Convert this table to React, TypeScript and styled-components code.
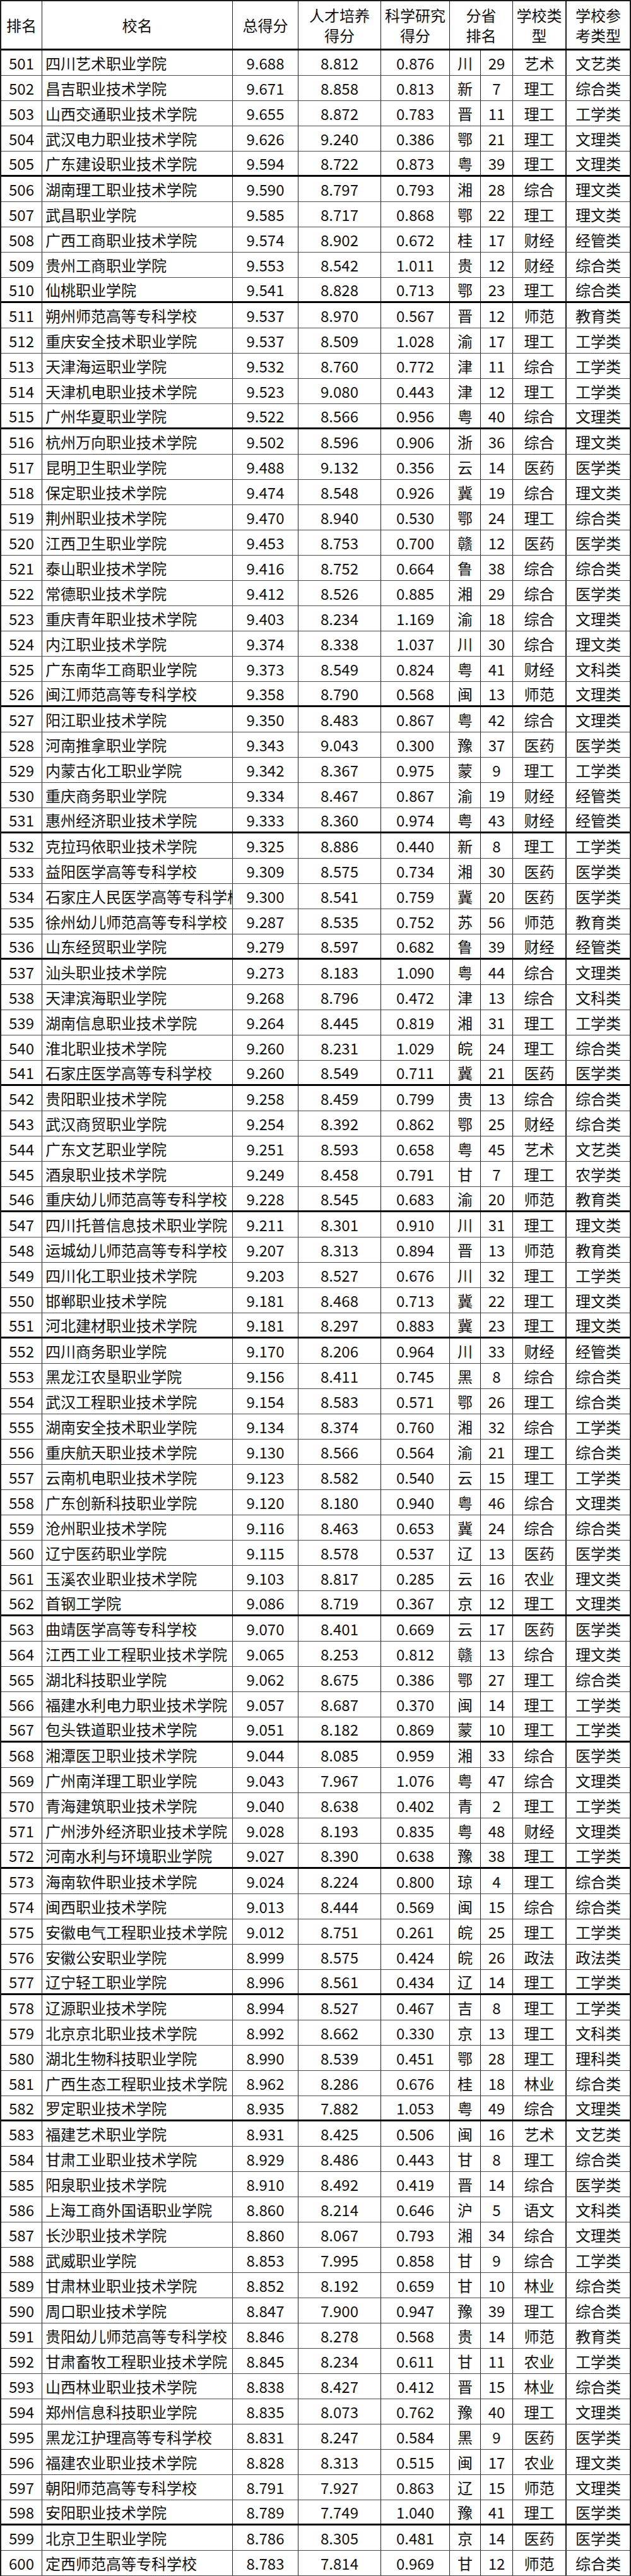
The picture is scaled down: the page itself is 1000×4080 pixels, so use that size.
import styled, { createGlobalStyle } from 'styled-components'

const GlobalStyle = createGlobalStyle`
  html, body {
    margin: 0;
    padding: 0;
    background: #fff;
  }
  body {
    font-family: 'Noto Sans CJK SC', 'Noto Sans', sans-serif;
    color: #111;
  }
`

const COLUMNS = '65px 302px 104px 131px 109px 49px 51px 85px 100px'

// rank name total talent research province provRank type refType
const RAW = `501 四川艺术职业学院 9.688 8.812 0.876 川 29 艺术 文艺类
502 昌吉职业技术学院 9.671 8.858 0.813 新 7 理工 综合类
503 山西交通职业技术学院 9.655 8.872 0.783 晋 11 理工 工学类
504 武汉电力职业技术学院 9.626 9.240 0.386 鄂 21 理工 文理类
505 广东建设职业技术学院 9.594 8.722 0.873 粤 39 理工 文理类
506 湖南理工职业技术学院 9.590 8.797 0.793 湘 28 综合 理文类
507 武昌职业学院 9.585 8.717 0.868 鄂 22 理工 理文类
508 广西工商职业技术学院 9.574 8.902 0.672 桂 17 财经 经管类
509 贵州工商职业学院 9.553 8.542 1.011 贵 12 财经 综合类
510 仙桃职业学院 9.541 8.828 0.713 鄂 23 理工 综合类
511 朔州师范高等专科学校 9.537 8.970 0.567 晋 12 师范 教育类
512 重庆安全技术职业学院 9.537 8.509 1.028 渝 17 理工 工学类
513 天津海运职业学院 9.532 8.760 0.772 津 11 综合 工学类
514 天津机电职业技术学院 9.523 9.080 0.443 津 12 理工 工学类
515 广州华夏职业学院 9.522 8.566 0.956 粤 40 综合 文理类
516 杭州万向职业技术学院 9.502 8.596 0.906 浙 36 综合 理文类
517 昆明卫生职业学院 9.488 9.132 0.356 云 14 医药 医学类
518 保定职业技术学院 9.474 8.548 0.926 冀 19 综合 理文类
519 荆州职业技术学院 9.470 8.940 0.530 鄂 24 理工 综合类
520 江西卫生职业学院 9.453 8.753 0.700 赣 12 医药 医学类
521 泰山职业技术学院 9.416 8.752 0.664 鲁 38 综合 综合类
522 常德职业技术学院 9.412 8.526 0.885 湘 29 综合 医学类
523 重庆青年职业技术学院 9.403 8.234 1.169 渝 18 综合 文理类
524 内江职业技术学院 9.374 8.338 1.037 川 30 综合 理文类
525 广东南华工商职业学院 9.373 8.549 0.824 粤 41 财经 文科类
526 闽江师范高等专科学校 9.358 8.790 0.568 闽 13 师范 文理类
527 阳江职业技术学院 9.350 8.483 0.867 粤 42 综合 文理类
528 河南推拿职业学院 9.343 9.043 0.300 豫 37 医药 医学类
529 内蒙古化工职业学院 9.342 8.367 0.975 蒙 9 理工 工学类
530 重庆商务职业学院 9.334 8.467 0.867 渝 19 财经 经管类
531 惠州经济职业技术学院 9.333 8.360 0.974 粤 43 财经 经管类
532 克拉玛依职业技术学院 9.325 8.886 0.440 新 8 理工 工学类
533 益阳医学高等专科学校 9.309 8.575 0.734 湘 30 医药 医学类
534 石家庄人民医学高等专科学校 9.300 8.541 0.759 冀 20 医药 医学类
535 徐州幼儿师范高等专科学校 9.287 8.535 0.752 苏 56 师范 教育类
536 山东经贸职业学院 9.279 8.597 0.682 鲁 39 财经 经管类
537 汕头职业技术学院 9.273 8.183 1.090 粤 44 综合 文理类
538 天津滨海职业学院 9.268 8.796 0.472 津 13 综合 文科类
539 湖南信息职业技术学院 9.264 8.445 0.819 湘 31 理工 工学类
540 淮北职业技术学院 9.260 8.231 1.029 皖 24 理工 综合类
541 石家庄医学高等专科学校 9.260 8.549 0.711 冀 21 医药 医学类
542 贵阳职业技术学院 9.258 8.459 0.799 贵 13 综合 综合类
543 武汉商贸职业学院 9.254 8.392 0.862 鄂 25 财经 综合类
544 广东文艺职业学院 9.251 8.593 0.658 粤 45 艺术 文艺类
545 酒泉职业技术学院 9.249 8.458 0.791 甘 7 理工 农学类
546 重庆幼儿师范高等专科学校 9.228 8.545 0.683 渝 20 师范 教育类
547 四川托普信息技术职业学院 9.211 8.301 0.910 川 31 理工 理文类
548 运城幼儿师范高等专科学校 9.207 8.313 0.894 晋 13 师范 教育类
549 四川化工职业技术学院 9.203 8.527 0.676 川 32 理工 工学类
550 邯郸职业技术学院 9.181 8.468 0.713 冀 22 理工 理文类
551 河北建材职业技术学院 9.181 8.297 0.883 冀 23 理工 理文类
552 四川商务职业学院 9.170 8.206 0.964 川 33 财经 经管类
553 黑龙江农垦职业学院 9.156 8.411 0.745 黑 8 综合 综合类
554 武汉工程职业技术学院 9.154 8.583 0.571 鄂 26 理工 综合类
555 湖南安全技术职业学院 9.134 8.374 0.760 湘 32 综合 工学类
556 重庆航天职业技术学院 9.130 8.566 0.564 渝 21 理工 综合类
557 云南机电职业技术学院 9.123 8.582 0.540 云 15 理工 工学类
558 广东创新科技职业学院 9.120 8.180 0.940 粤 46 综合 文理类
559 沧州职业技术学院 9.116 8.463 0.653 冀 24 综合 综合类
560 辽宁医药职业学院 9.115 8.578 0.537 辽 13 医药 医学类
561 玉溪农业职业技术学院 9.103 8.817 0.285 云 16 农业 理文类
562 首钢工学院 9.086 8.719 0.367 京 12 理工 文理类
563 曲靖医学高等专科学校 9.070 8.401 0.669 云 17 医药 医学类
564 江西工业工程职业技术学院 9.065 8.253 0.812 赣 13 综合 理文类
565 湖北科技职业学院 9.062 8.675 0.386 鄂 27 理工 综合类
566 福建水利电力职业技术学院 9.057 8.687 0.370 闽 14 理工 工学类
567 包头铁道职业技术学院 9.051 8.182 0.869 蒙 10 理工 工学类
568 湘潭医卫职业技术学院 9.044 8.085 0.959 湘 33 综合 医学类
569 广州南洋理工职业学院 9.043 7.967 1.076 粤 47 综合 文理类
570 青海建筑职业技术学院 9.040 8.638 0.402 青 2 理工 工学类
571 广州涉外经济职业技术学院 9.028 8.193 0.835 粤 48 财经 文理类
572 河南水利与环境职业学院 9.027 8.390 0.638 豫 38 理工 工学类
573 海南软件职业技术学院 9.024 8.224 0.800 琼 4 理工 综合类
574 闽西职业技术学院 9.013 8.444 0.569 闽 15 综合 综合类
575 安徽电气工程职业技术学院 9.012 8.751 0.261 皖 25 理工 工学类
576 安徽公安职业学院 8.999 8.575 0.424 皖 26 政法 政法类
577 辽宁轻工职业学院 8.996 8.561 0.434 辽 14 理工 工学类
578 辽源职业技术学院 8.994 8.527 0.467 吉 8 理工 工学类
579 北京京北职业技术学院 8.992 8.662 0.330 京 13 理工 文科类
580 湖北生物科技职业学院 8.990 8.539 0.451 鄂 28 理工 理科类
581 广西生态工程职业技术学院 8.962 8.286 0.676 桂 18 林业 综合类
582 罗定职业技术学院 8.935 7.882 1.053 粤 49 综合 文理类
583 福建艺术职业学院 8.931 8.425 0.506 闽 16 艺术 文艺类
584 甘肃工业职业技术学院 8.929 8.486 0.443 甘 8 理工 综合类
585 阳泉职业技术学院 8.910 8.492 0.419 晋 14 综合 医学类
586 上海工商外国语职业学院 8.860 8.214 0.646 沪 5 语文 文科类
587 长沙职业技术学院 8.860 8.067 0.793 湘 34 综合 文理类
588 武威职业学院 8.853 7.995 0.858 甘 9 综合 工学类
589 甘肃林业职业技术学院 8.852 8.192 0.659 甘 10 林业 综合类
590 周口职业技术学院 8.847 7.900 0.947 豫 39 理工 综合类
591 贵阳幼儿师范高等专科学校 8.846 8.278 0.568 贵 14 师范 教育类
592 甘肃畜牧工程职业技术学院 8.845 8.234 0.611 甘 11 农业 工学类
593 山西林业职业技术学院 8.838 8.427 0.412 晋 15 林业 综合类
594 郑州信息科技职业学院 8.835 8.073 0.762 豫 40 理工 文理类
595 黑龙江护理高等专科学校 8.831 8.247 0.584 黑 9 医药 医学类
596 福建农业职业技术学院 8.828 8.313 0.515 闽 17 农业 理文类
597 朝阳师范高等专科学校 8.791 7.927 0.863 辽 15 师范 文理类
598 安阳职业技术学院 8.789 7.749 1.040 豫 41 理工 医学类
599 北京卫生职业学院 8.786 8.305 0.481 京 14 医药 医学类
600 定西师范高等专科学校 8.783 7.814 0.969 甘 12 师范 综合类`

const rows = RAW.split('\n').map((line) => line.trim().split(/\s+/))

// rows followed by a heavier rule in the scan
const THICK_AFTER = new Set([
  '505', '510', '515', '526', '531', '536', '541', '546', '551',
  '562', '567', '572', '577', '582', '598',
])

export default function App() {
  return (
    <>
      <GlobalStyle />
      <Sheet>
        <HeadRow>
          <HeadCell>排名</HeadCell>
          <HeadCell>校名</HeadCell>
          <HeadCell>总得分</HeadCell>
          <HeadCell>
            人才培养
            <br />
            得分
          </HeadCell>
          <HeadCell>
            科学研究
            <br />
            得分
          </HeadCell>
          <HeadCell $span={2}>
            分省
            <br />
            排名
          </HeadCell>
          <HeadCell $heavy>
            学校类
            <br />型
          </HeadCell>
          <HeadCell>
            学校参
            <br />
            考类型
          </HeadCell>
        </HeadRow>
        {rows.map(([rank, name, total, talent, research, prov, provRank, type, refType]) => (
          <Row key={rank} $thick={THICK_AFTER.has(rank)}>
            <Cell>{rank}</Cell>
            <NameCell>{name}</NameCell>
            <Cell>{total}</Cell>
            <Cell>{talent}</Cell>
            <Cell>{research}</Cell>
            <Cell>{prov}</Cell>
            <Cell>{provRank}</Cell>
            <Cell $heavy>{type}</Cell>
            <Cell>{refType}</Cell>
          </Row>
        ))}
      </Sheet>
    </>
  )
}

const Sheet = styled.div`
  width: 1000px;
  box-sizing: border-box;
  border-left: 2px solid #1a1a1a;
  border-right: 2px solid #1a1a1a;
  background: #fff;
`

const HeadRow = styled.div`
  display: grid;
  grid-template-columns: ${COLUMNS};
  height: 80px;
  box-sizing: border-box;
  border-top: 2px solid #1a1a1a;
  border-bottom: 3px solid #000;
`

const HeadCell = styled.div<{ $span?: number; $heavy?: boolean }>`
  grid-column: ${(p) => (p.$span ? `span ${p.$span}` : 'auto')};
  display: flex;
  align-items: center;
  justify-content: center;
  text-align: center;
  box-sizing: border-box;
  border-right: ${(p) => (p.$heavy ? '2px' : '1px')} solid #222;
  font-size: 24px;
  line-height: 32px;
  color: #111;
  white-space: nowrap;
  overflow: hidden;

  &:last-child {
    border-right: none;
  }
`

const Row = styled.div<{ $thick?: boolean }>`
  display: grid;
  grid-template-columns: ${COLUMNS};
  height: 40px;
  box-sizing: border-box;
  border-bottom: ${(p) => (p.$thick ? '3px solid #000' : '1px solid #4a4a4a')};
`

const Cell = styled.div<{ $heavy?: boolean }>`
  display: flex;
  align-items: center;
  justify-content: center;
  box-sizing: border-box;
  border-right: ${(p) => (p.$heavy ? '2px' : '1px')} solid #222;
  font-size: 24px;
  line-height: 1;
  color: #111;
  white-space: nowrap;
  overflow: hidden;

  &:last-child {
    border-right: none;
  }
`

const NameCell = styled(Cell)`
  justify-content: flex-start;
  padding-left: 5px;
`
